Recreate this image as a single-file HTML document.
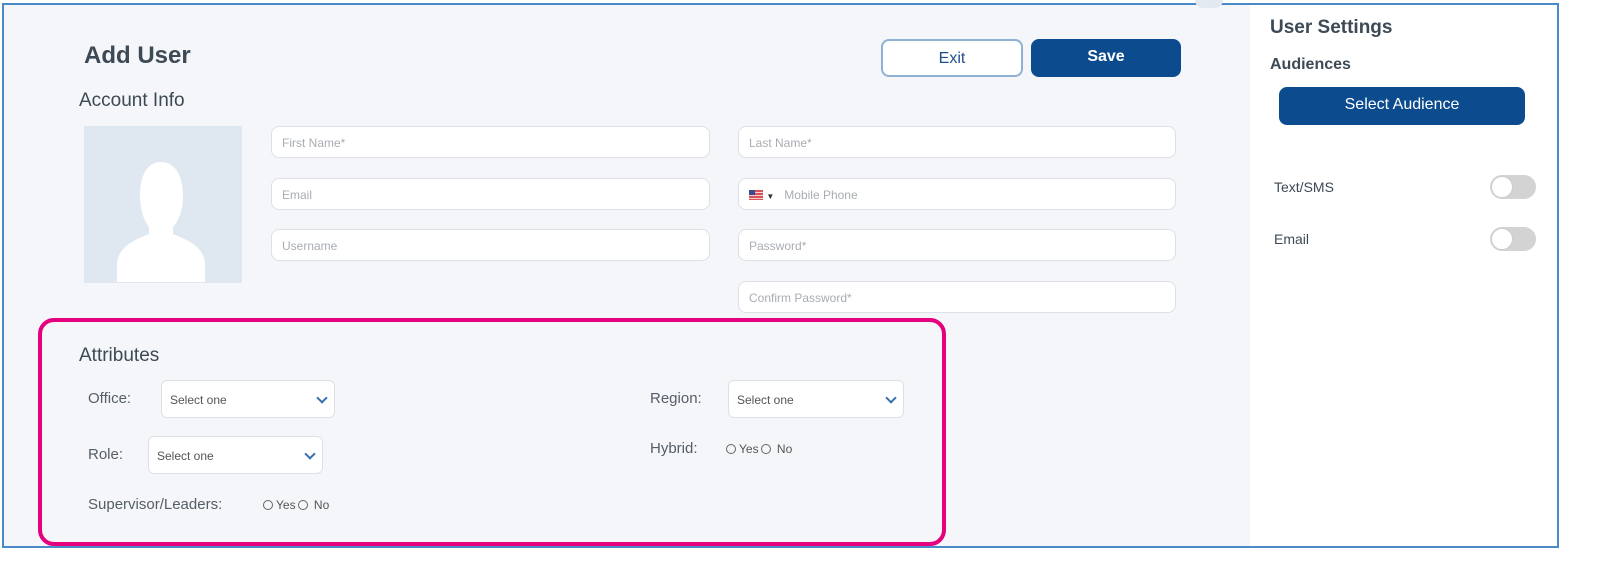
<!DOCTYPE html>
<html><head><style>
*{box-sizing:border-box;margin:0;padding:0}
body{width:1600px;height:562px;background:#fff;font-family:"Liberation Sans",sans-serif;position:relative;overflow:hidden;color:#3d4a55}
.frame{position:absolute;left:2px;top:3px;width:1557px;height:545px;border:2px solid #4a8ac9;background:#f4f6f9}
.side{position:absolute;left:1250px;top:5px;width:307px;height:541px;background:#fff}
.a{position:absolute}
.inp{position:absolute;height:32px;background:#fff;border:1px solid #dde1e6;border-radius:8px;font-size:12px;color:#a8adb3;padding:9px 10px}
.btn{position:absolute;border-radius:8px;font-size:16px;font-weight:bold;text-align:center}
.sel{position:absolute;height:38px;background:#fff;border:1px solid #dde1e6;border-radius:6px;font-size:12px;color:#555;padding:12px 8px}
.sel::after{content:"";position:absolute;right:8px;top:13px;width:6px;height:6px;border-right:2px solid #3a6fb0;border-bottom:2px solid #3a6fb0;transform:rotate(45deg)}
.lbl{position:absolute;font-size:15px;color:#555d66}
.r{display:inline-block;width:10px;height:10px;border:1px solid #666;border-radius:50%;vertical-align:-1px;margin:0 3px 0 0}
.rad{position:absolute;font-size:12px;color:#555}
.tog{position:absolute;width:46px;height:24px;border-radius:12px;background:#d3d3d3}
.tog::after{content:"";position:absolute;left:1px;top:1px;width:22px;height:22px;border-radius:50%;background:#fff;border:1px solid #ccc;box-sizing:border-box}
</style></head><body>
<div class="frame"></div>
<div class="side"></div>
<div class="a" style="left:1195px;top:0;width:28px;height:8px;border-radius:0 0 14px 14px;background:#e3e9f1"></div>
<div class="a" style="left:84px;top:42px;font-size:24px;font-weight:bold;color:#3d4a55">Add User</div>
<div class="a" style="left:79px;top:90px;font-size:19px;color:#3d4a55">Account Info</div>
<div class="a" style="left:84px;top:126px;width:158px;height:157px;background:#dfe8f1">
<svg width="158" height="157" viewBox="0 0 158 157"><path fill="#fff" d="M56 70c0-22 8-34 21-34s22 12 22 34c0 12-3 23-10 31v7c15 6 29 12 32 28v20H33v-20c3-16 17-22 32-28v-7c-6-8-9-19-9-31z"/></svg></div>
<div class="inp" style="left:271px;top:126px;width:439px">First Name*</div>
<div class="inp" style="left:271px;top:178px;width:439px">Email</div>
<div class="inp" style="left:271px;top:229px;width:439px">Username</div>
<div class="inp" style="left:738px;top:126px;width:438px">Last Name*</div>
<div class="inp" style="left:738px;top:178px;width:438px"><span style="display:inline-block;width:14px;height:10px;background:linear-gradient(#3c4a8e 0 50%,transparent 50%) 0 0/6px 100% no-repeat,repeating-linear-gradient(#d9535b 0 2px,#f5d0d2 2px 3px);vertical-align:-1px"></span> <span style="font-size:8px;color:#333">▼</span>&nbsp;&nbsp; Mobile Phone</div>
<div class="inp" style="left:738px;top:229px;width:438px">Password*</div>
<div class="inp" style="left:738px;top:281px;width:438px">Confirm Password*</div>
<div class="btn" style="left:881px;top:39px;width:142px;height:38px;border:2px solid #8fb1d5;background:#fff;color:#1f4f8a;font-weight:normal;padding-top:9px">Exit</div>
<div class="btn" style="left:1031px;top:39px;width:150px;height:38px;background:#0c4b8e;color:#fff;padding-top:9px">Save</div>
<div class="a" style="left:1270px;top:17px;font-size:19px;font-weight:bold;color:#3d4a55">User Settings</div>
<div class="a" style="left:1270px;top:56px;font-size:16px;font-weight:bold;color:#3d4a55">Audiences</div>
<div class="btn" style="left:1279px;top:87px;width:246px;height:38px;background:#0c4b8e;color:#fff;font-weight:normal;padding-top:9px">Select Audience</div>
<div class="a" style="left:1274px;top:179px;font-size:14px;color:#3d4a55">Text/SMS</div>
<div class="tog" style="left:1490px;top:175px"></div>
<div class="a" style="left:1274px;top:231px;font-size:14px;color:#3d4a55">Email</div>
<div class="tog" style="left:1490px;top:227px"></div>
<div class="a" style="left:38px;top:318px;width:908px;height:228px;border:4px solid #e6007e;border-radius:16px"></div>
<div class="a" style="left:79px;top:345px;font-size:19px;color:#3d4a55">Attributes</div>
<div class="lbl" style="left:88px;top:390px">Office:</div>
<div class="sel" style="left:161px;top:380px;width:174px">Select one</div>
<div class="lbl" style="left:88px;top:446px">Role:</div>
<div class="sel" style="left:148px;top:436px;width:175px">Select one</div>
<div class="lbl" style="left:88px;top:496px">Supervisor/Leaders:</div>
<div class="rad" style="left:263px;top:498px"><span class="r"></span>Yes<span class="r" style="margin-left:2px"></span> No</div>
<div class="lbl" style="left:650px;top:390px">Region:</div>
<div class="sel" style="left:728px;top:380px;width:176px">Select one</div>
<div class="lbl" style="left:650px;top:440px">Hybrid:</div>
<div class="rad" style="left:726px;top:442px"><span class="r"></span>Yes<span class="r" style="margin-left:2px"></span> No</div>
</body></html>
